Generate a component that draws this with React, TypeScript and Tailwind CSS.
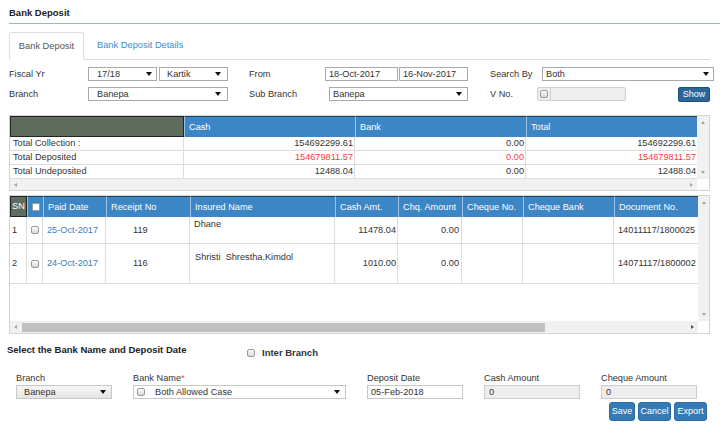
import React from "react";

function Caret() {
  return <span className="w-0 h-0 border-x-[3px] border-x-transparent border-t-[4px] border-t-[#111] shrink-0" />;
}

function Check({ className = "" }: { className?: string }) {
  return (
    <span
      className={`inline-block w-[8px] h-[8px] rounded-[2px] border border-[#9a9a9a] bg-linear-to-b from-[#ffffff] to-[#d6d6d6] shrink-0 ${className}`}
    />
  );
}

function Sel({ className, text }: { className: string; text: string }) {
  return (
    <div className={`h-[14px] border border-[#a9a9a9] bg-white flex items-center justify-between ${className}`}>
      <span>{text}</span>
      <Caret />
    </div>
  );
}

function UpArrow() {
  return <span className="w-0 h-0 border-x-[2.5px] border-x-transparent border-b-[3px] border-b-[#a3a3a3]" />;
}
function DownArrow() {
  return <span className="w-0 h-0 border-x-[2.5px] border-x-transparent border-t-[3px] border-t-[#a3a3a3]" />;
}
function LeftArrow() {
  return <span className="w-0 h-0 border-y-[2.5px] border-y-transparent border-r-[3px] border-r-[#a3a3a3]" />;
}
function RightArrow({ dark = false }: { dark?: boolean }) {
  return (
    <span
      className={`w-0 h-0 border-y-[2.5px] border-y-transparent border-l-[3px] ${dark ? "border-l-[#505050]" : "border-l-[#a3a3a3]"}`}
    />
  );
}

const summaryRows = [
  { label: "Total Collection :", cash: "154692299.61", bank: "0.00", total: "154692299.61", red: false },
  { label: "Total Deposited", cash: "154679811.57", bank: "0.00", total: "154679811.57", red: true },
  { label: "Total Undeposited", cash: "12488.04", bank: "0.00", total: "12488.04", red: false },
];

export default function App() {
  return (
    <div className="w-[720px] h-[425px] bg-white text-[#333] text-[9.2px] leading-[11px] font-['Liberation_Sans',Arial,sans-serif] overflow-hidden">
      {/* Title */}
      <div className="ml-[9px] h-[24px] border-b border-[#8fbae2] pt-[7px] text-[9.5px] font-bold text-[#222]">
        Bank Deposit
      </div>

      {/* Tabs */}
      <div className="ml-[9px] mt-[8px] w-[701px] h-[28px] flex border-b border-[#ddd]">
        <div className="relative w-[75px] h-[28px] border border-[#ddd] border-b-white rounded-t-[3px] bg-white flex items-center justify-center text-[#555] text-[9.3px]">
          Bank Deposit
        </div>
        <div className="ml-[13px] flex items-center text-[#3b8bd0] text-[9.3px]">Bank Deposit Details</div>
      </div>

      {/* Filter row 1 */}
      <div className="mt-[7px] ml-[9px] flex items-center h-[14px]">
        <div className="w-[79px]">Fiscal Yr</div>
        <Sel className="w-[69px] pl-[8px] pr-[4px]" text="17/18" />
        <Sel className="ml-[2px] w-[69px] pl-[7px] pr-[6px]" text="Kartik" />
        <div className="ml-[21px] w-[76px]">From</div>
        <div className="w-[73px] h-[14px] border border-[#a9a9a9] flex items-center pl-[3px]">18-Oct-2017</div>
        <div className="ml-[1px] w-[69px] h-[14px] border border-[#a9a9a9] flex items-center pl-[3px]">16-Nov-2017</div>
        <div className="ml-[22px] w-[52px]">Search By</div>
        <Sel className="w-[172px] pl-[3px] pr-[4px]" text="Both" />
      </div>

      {/* Filter row 2 */}
      <div className="mt-[6px] ml-[9px] flex items-start h-[15px]">
        <div className="w-[79px] h-[14px] flex items-center">Branch</div>
        <Sel className="w-[140px] pl-[8px] pr-[6px]" text="Banepa" />
        <div className="ml-[21px] w-[80px] h-[14px] flex items-center">Sub Branch</div>
        <Sel className="w-[139px] pl-[3px] pr-[5px]" text="Banepa" />
        <div className="ml-[22px] w-[47px] h-[14px] flex items-center">V No.</div>
        <div className="w-[89px] h-[14px] border border-[#d0d0d0] rounded-[2px] bg-[#eeeeee] flex items-center">
          <div className="w-[13px] h-full flex items-center justify-center border-r border-[#d0d0d0]">
            <Check />
          </div>
        </div>
        <div className="ml-[52px] w-[32px] h-[15px] rounded-[2px] bg-[#2b669a] border border-[#1f4e78] text-white flex items-center justify-center text-[9px]">
          Show
        </div>
      </div>

      {/* Summary table */}
      <div className="mt-[13px] ml-[9px] w-[701px] border border-[#d4d4d4] flex flex-col">
        <div className="flex">
          <div className="w-[687px] flex flex-col">
            <div className="flex h-[21px] text-white">
              <div className="w-[174px] bg-[#5e6b5d] border border-[#222]" />
              <div className="w-[171px] bg-[#3d86c6] border-t border-t-[#23405c] border-l border-l-[#9cc3e6] pl-[4px] flex items-center">Cash</div>
              <div className="w-[171px] bg-[#3d86c6] border-t border-t-[#23405c] border-l border-l-[#9cc3e6] pl-[4px] flex items-center">Bank</div>
              <div className="w-[171px] bg-[#3d86c6] border-t border-t-[#23405c] border-l border-l-[#9cc3e6] pl-[4px] flex items-center">Total</div>
            </div>
            {summaryRows.map((r) => (
              <div key={r.label} className="flex h-[14px] border-b border-[#ddd]">
                <div className="w-[174px] pl-[3px] flex items-center border-r border-[#ddd]">{r.label}</div>
                <div className={`w-[171px] pr-[1px] flex items-center justify-end border-r border-[#ddd] ${r.red ? "text-[#ff3b3b]" : ""}`}>{r.cash}</div>
                <div className={`w-[171px] pr-[1px] flex items-center justify-end border-r border-[#ddd] ${r.red ? "text-[#ff3b3b]" : ""}`}>{r.bank}</div>
                <div className={`w-[171px] pr-[1px] flex items-center justify-end ${r.red ? "text-[#ff3b3b]" : ""}`}>{r.total}</div>
              </div>
            ))}
          </div>
          <div className="w-[12px] bg-[#f1f1f1] flex flex-col items-center justify-between py-[5px]">
            <UpArrow />
            <DownArrow />
          </div>
        </div>
        <div className="flex h-[11px]">
          <div className="w-[687px] bg-[#f1f1f1] flex items-center justify-between px-[4px]">
            <LeftArrow />
            <RightArrow />
          </div>
          <div className="w-[12px] bg-white" />
        </div>
      </div>

      {/* Main table */}
      <div className="mt-[4px] ml-[9px] w-[701px] border border-[#d4d4d4] flex flex-col">
        <div className="flex">
          <div className="w-[688px] flex flex-col">
            <div className="flex h-[21px] text-white">
              <div className="w-[17px] bg-[#5e6b5d] border border-[#222] flex items-center pl-[1px]">SN</div>
              <div className="w-[16px] bg-[#3d86c6] border-t border-t-[#23405c] border-l border-l-[#9cc3e6] flex items-center justify-center">
                <span className="inline-block w-[8px] h-[8px] bg-white border border-[#9a9a9a] rounded-[1px]" />
              </div>
              {[
                ["w-[63px]", "Paid Date"],
                ["w-[84px]", "Receipt No"],
                ["w-[145px]", "Insured Name"],
                ["w-[63px]", "Cash Amt."],
                ["w-[64px]", "Chq. Amount"],
                ["w-[61px]", "Cheque No."],
                ["w-[91px]", "Cheque Bank"],
                ["w-[84px]", "Document No."],
              ].map(([w, t]) => (
                <div
                  key={t}
                  className={`${w} bg-[#3d86c6] border-t border-t-[#23405c] border-l border-l-[#9cc3e6] pl-[4px] flex items-center whitespace-nowrap overflow-hidden`}
                >
                  {t}
                </div>
              ))}
            </div>
            {[
              { sn: "1", date: "25-Oct-2017", rc: "119", name: "Dhane", cash: "11478.04", chq: "0.00", doc: "14011117/1800025", h: "h-[27px]", np: "pt-[2px] pl-[4px]" },
              { sn: "2", date: "24-Oct-2017", rc: "116", name: "Shristi\u00a0 Shrestha,Kimdol", cash: "1010.00", chq: "0.00", doc: "14071117/1800002", h: "h-[40px]", np: "pt-[8px] pl-[5px]" },
            ].map((r) => (
              <div key={r.sn} className={`flex ${r.h} border-b border-[#ddd]`}>
                <div className="w-[17px] pl-[2px] flex items-center border-r border-[#ddd]">{r.sn}</div>
                <div className="w-[16px] flex items-center justify-center border-r border-[#ddd]">
                  <Check />
                </div>
                <div className="w-[63px] pl-[4px] flex items-center border-r border-[#ddd] text-[#3a80c3]">{r.date}</div>
                <div className="w-[84px] pl-[27px] flex items-center border-r border-[#ddd]">{r.rc}</div>
                <div className={`w-[145px] ${r.np} border-r border-[#ddd] whitespace-nowrap`}>{r.name}</div>
                <div className="w-[63px] pr-[1px] flex items-center justify-end border-r border-[#ddd]">{r.cash}</div>
                <div className="w-[64px] pr-[2px] flex items-center justify-end border-r border-[#ddd]">{r.chq}</div>
                <div className="w-[61px] border-r border-[#ddd]" />
                <div className="w-[91px] border-r border-[#ddd]" />
                <div className="w-[84px] pl-[4px] flex items-center whitespace-nowrap overflow-hidden">{r.doc}</div>
              </div>
            ))}
            <div className="h-[37px]" />
          </div>
          <div className="w-[11px] bg-[#f1f1f1] flex flex-col items-center justify-between py-[5px]">
            <UpArrow />
            <DownArrow />
          </div>
        </div>
        <div className="flex h-[12px]">
          <div className="w-[688px] bg-[#f1f1f1] flex items-center px-[4px]">
            <LeftArrow />
            <div className="ml-[5px] w-[523px] h-[9px] bg-[#c1c1c1]" />
            <div className="flex-1" />
            <RightArrow dark />
          </div>
          <div className="w-[11px] bg-white" />
        </div>
      </div>

      {/* Bottom section */}
      <div className="mt-[10px] ml-[7px] flex items-start">
        <div className="w-[240px] h-[12px] font-bold text-[9.5px] text-[#222] leading-[12px]">
          Select the Bank Name and Deposit Date
        </div>
        <div className="mt-[3px] flex items-center">
          <Check />
          <span className="ml-[7px] font-bold text-[9.5px] text-[#333]">Inter Branch</span>
        </div>
      </div>

      <div className="mt-[15px] ml-[16px] flex">
        <div className="w-[96px]">Branch</div>
        <div className="ml-[21px] w-[213px]">
          Bank Name<span className="text-[#ff3b3b]">*</span>
        </div>
        <div className="ml-[21px] w-[96px]">Deposit Date</div>
        <div className="ml-[21px] w-[96px]">Cash Amount</div>
        <div className="ml-[21px] w-[96px]">Cheque Amount</div>
      </div>
      <div className="mt-[1px] ml-[16px] flex">
        <div className="w-[96px] h-[14px] border border-[#c8c8c8] bg-linear-to-b from-[#f6f6f6] to-[#e4e4e4] flex items-center justify-between pl-[7px] pr-[5px]">
          <span>Banepa</span>
          <Caret />
        </div>
        <div className="ml-[21px] w-[213px] h-[14px] border border-[#c8c8c8] bg-white flex items-center pr-[5px]">
          <Check className="ml-[3px]" />
          <span className="ml-[10px] flex-1">Both Allowed Case</span>
          <Caret />
        </div>
        <div className="ml-[21px] w-[96px] h-[14px] border border-[#c8c8c8] bg-white flex items-center pl-[3px]">05-Feb-2018</div>
        <div className="ml-[21px] w-[96px] h-[14px] border border-[#cccccc] bg-[#eeeeee] flex items-center pl-[4px]">0</div>
        <div className="ml-[21px] w-[96px] h-[14px] border border-[#cccccc] bg-[#eeeeee] flex items-center pl-[4px]">0</div>
      </div>
      <div className="mt-[3px] w-[707px] flex justify-end gap-[3px]">
        <div className="w-[26px] h-[19px] rounded-[3px] bg-[#337ab7] border border-[#2e6da4] text-white flex items-center justify-center text-[9px]">Save</div>
        <div className="w-[33px] h-[19px] rounded-[3px] bg-[#337ab7] border border-[#2e6da4] text-white flex items-center justify-center text-[9px]">Cancel</div>
        <div className="w-[33px] h-[19px] rounded-[3px] bg-[#337ab7] border border-[#2e6da4] text-white flex items-center justify-center text-[9px]">Export</div>
      </div>
    </div>
  );
}
